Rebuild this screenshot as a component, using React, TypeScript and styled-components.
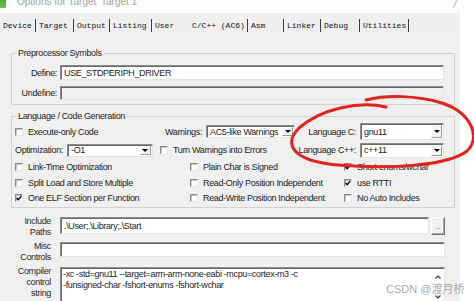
import styled, { createGlobalStyle } from "styled-components";

const GlobalStyle = createGlobalStyle`
  html, body {
    margin: 0;
    padding: 0;
    background: #ffffff;
  }
  body {
    font-family: "Liberation Sans", Arial, sans-serif;
    color: #1c1c1c;
  }
`;

const Screen = styled.div`
  position: relative;
  width: 474px;
  height: 301px;
  overflow: hidden;
  background: #ffffff;
`;

const Dialog = styled.div`
  width: 460px;
  display: flex;
  flex-direction: column;
`;

const TitleBar = styled.div`
  height: 13px;
  display: flex;
  align-items: flex-end;
  justify-content: space-between;
  overflow: hidden;
  background: #fcfcfc;
  padding-bottom: 5px;
  box-sizing: border-box;
`;

const TitleLeft = styled.div`
  display: flex;
  align-items: flex-end;
  gap: 11px;
`;

const TitleIcon = styled.span`
  width: 6px;
  height: 13px;
  background: linear-gradient(#3f9a2e, #6cc04a);
  border-radius: 0 0 1px 1px;
`;

const TitleText = styled.span`
  font-size: 10px;
  line-height: 12px;
  color: #a2a2a2;
  white-space: pre;
`;

const TabStrip = styled.div`
  height: 20px;
  display: flex;
  align-items: flex-end;
  background: #efefef;
  font-family: "Liberation Mono", "DejaVu Sans Mono", monospace;
  font-size: 8px;
  color: #111;
`;

const Tab = styled.div<{ $w: number; $sep?: boolean; $active?: boolean }>`
  box-sizing: border-box;
  width: ${({ $w }) => $w}px;
  height: 13px;
  line-height: 13px;
  margin-bottom: 1px;
  padding-left: ${({ $active }) => ($active ? 6 : 3)}px;
  white-space: pre;
  border-right: 1px solid ${({ $sep }) => ($sep ? "#3c3c3c" : "transparent")};
`;

const Page = styled.div`
  height: 268px;
  box-sizing: border-box;
  background: #f0f0f0;
  padding: 14px 5px 0 11px;
  display: flex;
  flex-direction: column;
  font-size: 9px;
  letter-spacing: -0.35px;
`;

const Group = styled.fieldset<{ $gapTop?: number }>`
  margin: ${({ $gapTop }) => $gapTop ?? 0}px 0 0 0;
  padding: 3px 10px 1px 3px;
  border: 1px solid #d2d2d2;
  min-width: 0;
`;

const GroupTitle = styled.legend`
  padding: 0 2px;
  margin-left: 1px;
  font-size: 9px;
  line-height: 12px;
`;

const SymbolRow = styled.div<{ $h: number }>`
  height: ${({ $h }) => $h}px;
  display: grid;
  grid-template-columns: 42px 1fr;
  column-gap: 3px;
  align-items: center;
`;

const RightLabel = styled.span`
  text-align: right;
  white-space: nowrap;
`;

const TextBox = styled.div<{ $h: number; $disabled?: boolean }>`
  box-sizing: border-box;
  height: ${({ $h }) => $h}px;
  background: ${({ $disabled }) => ($disabled ? "#f0f0f0" : "#ffffff")};
  border: 1px solid;
  border-color: #8d8d8d #e4e4e4 #e4e4e4 #8d8d8d;
  box-shadow: inset 1px 1px 0 #6a6a6a;
  padding: 0 3px;
  display: flex;
  align-items: center;
  white-space: nowrap;
  overflow: hidden;
`;

const OptionRow = styled.div<{ $h: number }>`
  height: ${({ $h }) => $h}px;
  display: flex;
  align-items: center;
`;

const Cell = styled.div<{ $w?: number; $end?: boolean }>`
  ${({ $w }) => ($w ? `width: ${$w}px; flex: none;` : "flex: 1;")}
  display: flex;
  align-items: center;
  gap: 4px;
  justify-content: ${({ $end }) => ($end ? "flex-end" : "flex-start")};
  white-space: nowrap;
`;

const CheckItem = styled.label`
  display: flex;
  align-items: center;
  gap: 5px;
  white-space: nowrap;
`;

const CheckBox = styled.span`
  box-sizing: border-box;
  width: 8px;
  height: 8px;
  flex: none;
  background: #ffffff;
  border: 1px solid;
  border-color: #8a8a8a #e8e8e8 #e8e8e8 #8a8a8a;
  box-shadow: inset 1px 1px 0 #c4c4c4;
  display: flex;
  align-items: center;
  justify-content: center;
`;

const Combo = styled.div<{ $w: number; $h: number }>`
  box-sizing: border-box;
  width: ${({ $w }) => $w}px;
  height: ${({ $h }) => $h}px;
  flex: none;
  display: flex;
  align-items: stretch;
  background: #ffffff;
  border: 1px solid;
  border-color: #8d8d8d #e4e4e4 #e4e4e4 #8d8d8d;
  box-shadow: inset 1px 1px 0 #6a6a6a;
`;

const ComboText = styled.span`
  flex: 1;
  padding-left: 3px;
  display: flex;
  align-items: center;
`;

const ComboButton = styled.span`
  box-sizing: border-box;
  width: 11px;
  margin: 1px 1px 1px 0;
  background: #f4f4f4;
  border: 1px solid;
  border-color: #ffffff #9a9a9a #9a9a9a #ffffff;
  display: flex;
  align-items: center;
  justify-content: center;
`;

const Arrow = styled.span`
  width: 0;
  height: 0;
  border-left: 3px solid transparent;
  border-right: 3px solid transparent;
  border-top: 3px solid #000;
`;

const FieldGrid = styled.div`
  margin-top: 8px;
  padding-right: 10px;
  display: grid;
  grid-template-columns: 40px 1fr;
  column-gap: 9px;
  row-gap: 3px;
  align-items: start;
`;

const StackLabel = styled.div`
  text-align: right;
  line-height: 11px;
  color: #2a2a2a;
`;

const PathRow = styled.div`
  display: flex;
  gap: 2px;
  margin-top: 1px;
`;

const BrowseButton = styled.div`
  box-sizing: border-box;
  width: 14px;
  height: 18px;
  flex: none;
  background: #f2f2f2;
  border: 1px solid;
  border-color: #ffffff #6e6e6e #6e6e6e #ffffff;
  box-shadow: inset -1px -1px 0 #b0b0b0;
  font-size: 7px;
  color: #555;
  display: flex;
  align-items: center;
  justify-content: center;
`;

const StringBox = styled.div`
  box-sizing: border-box;
  height: 40px;
  margin-top: 1px;
  background: #ffffff;
  border: 1px solid;
  border-color: #8d8d8d #e4e4e4 #e4e4e4 #8d8d8d;
  box-shadow: inset 1px 1px 0 #6a6a6a;
  padding: 1px 2px 0 2px;
  display: flex;
`;

const StringText = styled.div`
  flex: 1;
  line-height: 11px;
  white-space: pre;
`;

const ScrollArrows = styled.div`
  width: 9px;
  height: 24px;
  padding-top: 6px;
  display: flex;
  flex-direction: column;
  justify-content: space-between;
  align-items: center;
`;

const Watermark = styled.div`
  position: absolute;
  left: 386px;
  top: 283px;
  font-family: "Liberation Sans", "Noto Sans CJK SC", sans-serif;
  font-size: 11px;
  line-height: 13px;
  color: rgba(150, 150, 150, 0.85);
  white-space: nowrap;
`;

const Annotation = styled.svg`
  position: absolute;
  left: 0;
  top: 0;
  pointer-events: none;
`;

const Check = ({ checked }: { checked?: boolean }) => (
  <CheckBox>
    {checked && (
      <svg width="6" height="6" viewBox="0 0 6 6">
        <path d="M0.6 3 L2.3 4.8 L5.4 0.9" fill="none" stroke="#000" strokeWidth="1.4" />
      </svg>
    )}
  </CheckBox>
);

const Option = ({ label, checked }: { label: string; checked?: boolean }) => (
  <CheckItem>
    <Check checked={checked} />
    <span>{label}</span>
  </CheckItem>
);

const Select = ({ value, w, h }: { value: string; w: number; h: number }) => (
  <Combo $w={w} $h={h}>
    <ComboText>{value}</ComboText>
    <ComboButton>
      <Arrow />
    </ComboButton>
  </Combo>
);

const Chevron = ({ up }: { up?: boolean }) => (
  <svg width="6" height="4" viewBox="0 0 6 4">
    <path
      d={up ? "M0.5 3.5 L3 1 L5.5 3.5" : "M0.5 0.5 L3 3 L5.5 0.5"}
      fill="none"
      stroke="#333"
      strokeWidth="1.2"
    />
  </svg>
);

const tabs = [
  { label: "Device", w: 36, sep: true },
  { label: "Target", w: 38, sep: true },
  { label: "Output", w: 36, sep: true },
  { label: "Listing", w: 42, sep: true },
  { label: "User", w: 34 },
  { label: "C/C++ (AC6)", w: 62, sep: true, active: true },
  { label: "Asm", w: 36, sep: true },
  { label: "Linker", w: 37, sep: true },
  { label: "Debug", w: 39, sep: true },
  { label: "Utilities", w: 49, sep: true },
];

export default function App() {
  return (
    <Screen>
      <GlobalStyle />
      <Dialog>
        <TitleBar>
          <TitleLeft>
            <TitleIcon />
            <TitleText>Options for Target 'Target 1'</TitleText>
          </TitleLeft>
          <svg width="8" height="13" viewBox="0 0 8 13">
            <path d="M1 13 L6 3" stroke="#b8b8b8" strokeWidth="1" />
          </svg>
        </TitleBar>

        <TabStrip>
          {tabs.map((t) => (
            <Tab key={t.label} $w={t.w} $sep={t.sep} $active={t.active}>
              {t.label}
            </Tab>
          ))}
        </TabStrip>

        <Page>
          <Group>
            <GroupTitle>Preprocessor Symbols</GroupTitle>
            <SymbolRow $h={21}>
              <RightLabel>Define:</RightLabel>
              <TextBox $h={15}>USE_STDPERIPH_DRIVER</TextBox>
            </SymbolRow>
            <SymbolRow $h={20}>
              <RightLabel>Undefine:</RightLabel>
              <TextBox $h={14} $disabled />
            </SymbolRow>
          </Group>

          <Group $gapTop={5} style={{ paddingTop: 0, paddingBottom: 2 }}>
            <GroupTitle>Language / Code Generation</GroupTitle>
            <OptionRow $h={19}>
              <Cell $w={150}>
                <Option label="Execute-only Code" />
              </Cell>
              <Cell $w={132}>
                <span>Warnings:</span>
                <Select value="AC5-like Warnings" w={89} h={13} />
              </Cell>
              <Cell $end>
                <span>Language C:</span>
                <Select value="gnu11" w={84} h={17} />
              </Cell>
            </OptionRow>
            <OptionRow $h={18}>
              <Cell $w={145}>
                <span>Optimization:</span>
                <Select value="-O1" w={86} h={13} />
              </Cell>
              <Cell $w={137}>
                <Option label="Turn Warnings into Errors" />
              </Cell>
              <Cell $end>
                <span>Language C++:</span>
                <Select value="c++11" w={84} h={15} />
              </Cell>
            </OptionRow>
            <OptionRow $h={16}>
              <Cell $w={175}>
                <Option label="Link-Time Optimization" />
              </Cell>
              <Cell $w={154}>
                <Option label="Plain Char is Signed" />
              </Cell>
              <Cell>
                <Option label="Short enums/wchar" checked />
              </Cell>
            </OptionRow>
            <OptionRow $h={15}>
              <Cell $w={175}>
                <Option label="Split Load and Store Multiple" />
              </Cell>
              <Cell $w={154}>
                <Option label="Read-Only Position Independent" />
              </Cell>
              <Cell>
                <Option label="use RTTI" checked />
              </Cell>
            </OptionRow>
            <OptionRow $h={15}>
              <Cell $w={175}>
                <Option label="One ELF Section per Function" checked />
              </Cell>
              <Cell $w={154}>
                <Option label="Read-Write Position Independent" />
              </Cell>
              <Cell>
                <Option label="No Auto Includes" />
              </Cell>
            </OptionRow>
          </Group>

          <FieldGrid>
            <StackLabel>
              Include
              <br />
              Paths
            </StackLabel>
            <PathRow>
              <TextBox $h={17} style={{ flex: 1 }}>
                .\User;.\Library;.\Start
              </TextBox>
              <BrowseButton>...</BrowseButton>
            </PathRow>

            <StackLabel>
              Misc
              <br />
              Controls
            </StackLabel>
            <TextBox $h={15} style={{ marginTop: 1 }} />

            <StackLabel>
              Compiler
              <br />
              control
              <br />
              string
            </StackLabel>
            <StringBox>
              <StringText>
                {"-xc -std=gnu11 --target=arm-arm-none-eabi -mcpu=cortex-m3 -c\n-funsigned-char -fshort-enums -fshort-wchar"}
              </StringText>
              <ScrollArrows>
                <Chevron up />
                <Chevron />
              </ScrollArrows>
            </StringBox>
          </FieldGrid>
        </Page>
      </Dialog>

      <Watermark>CSDN @渡月桥</Watermark>

      <Annotation width="474" height="301" viewBox="0 0 474 301">
        <path
          d="M386 107 C360 101 322 108 299 128 C283 144 292 161 338 165 C390 169 448 166 467 151 C481 138 472 113 442 103 C416 95 386 95 366 100"
          fill="none"
          stroke="#e2231c"
          strokeWidth="3"
          strokeLinecap="round"
        />
      </Annotation>
    </Screen>
  );
}
